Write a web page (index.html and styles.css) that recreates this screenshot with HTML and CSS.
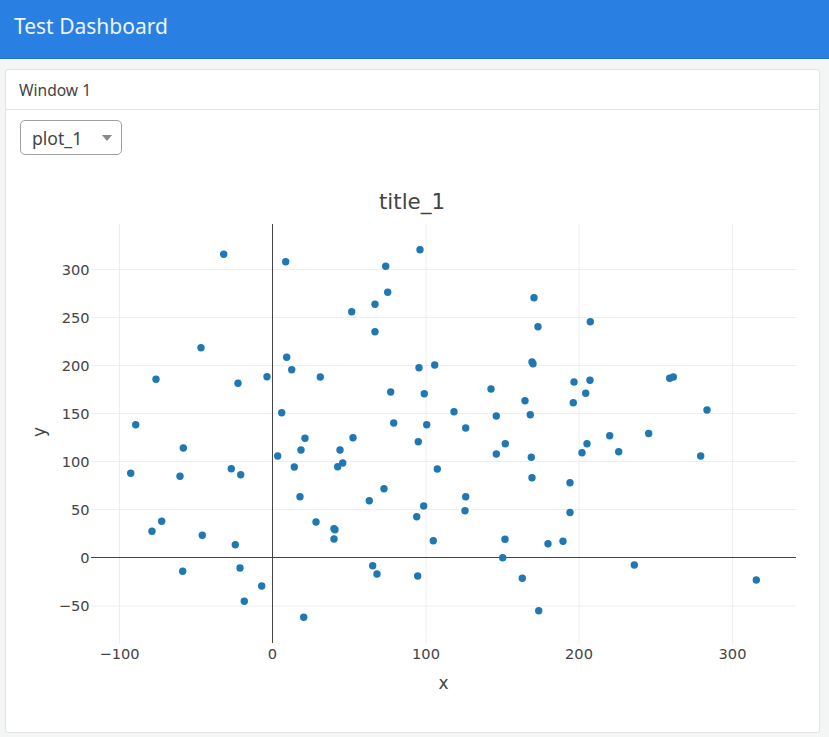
FILE: index.html
```html
<!DOCTYPE html>
<html lang="en">
<head>
<meta charset="utf-8">
<title>Test Dashboard</title>
<link rel="stylesheet" href="styles.css">
</head>
<body>
<header class="topbar">Test Dashboard</header>
<main class="content">
  <section class="card">
    <div class="card-header">Window 1</div>
    <div class="card-body">
      <div class="select"><span>plot_1</span><i class="caret"></i></div>
      <svg class="plot" width="813" height="562" viewBox="6 170 813 562">
        <g class="grid">
          <path d="M119.5 224V644M426 224V644M579 224V644M732.5 224V644"/>
          <path d="M91 269.5H796M91 317.5H796M91 365.5H796M91 413.5H796M91 461.5H796M91 509.5H796M91 606H796"/>
        </g>
        <path class="axis" d="M272.5 224V643M91 557.5H796"/>
        <g class="dots">
          <circle cx="223.7" cy="254.3" r="3.7"/><circle cx="285.7" cy="261.7" r="3.7"/><circle cx="201" cy="347.7" r="3.7"/><circle cx="286.7" cy="357.3" r="3.7"/><circle cx="291.7" cy="369.7" r="3.7"/><circle cx="156" cy="379.3" r="3.7"/><circle cx="238" cy="383.3" r="3.7"/><circle cx="267" cy="376.7" r="3.7"/><circle cx="320.3" cy="377" r="3.7"/><circle cx="281.7" cy="412.7" r="3.7"/><circle cx="135.7" cy="424.7" r="3.7"/>
          <circle cx="420" cy="249.7" r="3.7"/><circle cx="385.7" cy="266.3" r="3.7"/><circle cx="387.7" cy="292.3" r="3.7"/><circle cx="375" cy="304.3" r="3.7"/><circle cx="351.7" cy="311.7" r="3.7"/><circle cx="375" cy="331.7" r="3.7"/><circle cx="534" cy="297.7" r="3.7"/><circle cx="538" cy="326.7" r="3.7"/><circle cx="419" cy="367.7" r="3.7"/><circle cx="434.7" cy="365" r="3.7"/><circle cx="532" cy="362" r="3.7"/><circle cx="533" cy="363.7" r="3.7"/><circle cx="390.7" cy="392" r="3.7"/><circle cx="424.3" cy="393.7" r="3.7"/><circle cx="491" cy="389" r="3.7"/><circle cx="525" cy="400.7" r="3.7"/><circle cx="530.3" cy="414.7" r="3.7"/><circle cx="454" cy="411.7" r="3.7"/><circle cx="496.3" cy="416" r="3.7"/><circle cx="393.7" cy="423" r="3.7"/><circle cx="426.7" cy="424.7" r="3.7"/><circle cx="465.7" cy="428" r="3.7"/>
          <circle cx="590.3" cy="321.7" r="3.7"/><circle cx="574" cy="382" r="3.7"/><circle cx="590" cy="380.3" r="3.7"/><circle cx="669.7" cy="378.3" r="3.7"/><circle cx="673.3" cy="377" r="3.7"/><circle cx="585.7" cy="393.3" r="3.7"/><circle cx="573.3" cy="402.7" r="3.7"/><circle cx="707" cy="410" r="3.7"/><circle cx="609.7" cy="435.7" r="3.7"/><circle cx="648.7" cy="433.5" r="3.7"/>
          <circle cx="183.3" cy="448" r="3.7"/><circle cx="305" cy="438.3" r="3.7"/><circle cx="301" cy="450" r="3.7"/><circle cx="277.7" cy="456" r="3.7"/><circle cx="294.3" cy="467" r="3.7"/><circle cx="130.7" cy="473.3" r="3.7"/><circle cx="180" cy="476.3" r="3.7"/><circle cx="231.3" cy="468.7" r="3.7"/><circle cx="240.7" cy="474.7" r="3.7"/><circle cx="300" cy="496.7" r="3.7"/><circle cx="161.7" cy="521.3" r="3.7"/><circle cx="316" cy="522" r="3.7"/><circle cx="152" cy="531.3" r="3.7"/><circle cx="202.3" cy="535.3" r="3.7"/><circle cx="235.3" cy="544.7" r="3.7"/><circle cx="182.7" cy="571.3" r="3.7"/><circle cx="240" cy="568" r="3.7"/><circle cx="261.7" cy="586" r="3.7"/><circle cx="244.3" cy="601.3" r="3.7"/><circle cx="303.7" cy="617.3" r="3.7"/>
          <circle cx="353" cy="437.7" r="3.7"/><circle cx="418.3" cy="441.7" r="3.7"/><circle cx="505.3" cy="443.7" r="3.7"/><circle cx="496.3" cy="454" r="3.7"/><circle cx="531.3" cy="457.3" r="3.7"/><circle cx="340" cy="450" r="3.7"/><circle cx="342.7" cy="463" r="3.7"/><circle cx="337.7" cy="466.7" r="3.7"/><circle cx="437.3" cy="469" r="3.7"/><circle cx="532" cy="477.7" r="3.7"/><circle cx="570" cy="482.7" r="3.7"/><circle cx="384" cy="488.7" r="3.7"/><circle cx="369.3" cy="500.7" r="3.7"/><circle cx="465.7" cy="496.7" r="3.7"/><circle cx="423.7" cy="506" r="3.7"/><circle cx="465" cy="510.7" r="3.7"/><circle cx="416.7" cy="516.7" r="3.7"/><circle cx="570" cy="512.5" r="3.7"/><circle cx="334" cy="528.7" r="3.7"/><circle cx="335" cy="529.7" r="3.7"/><circle cx="334" cy="539" r="3.7"/><circle cx="433.3" cy="540.7" r="3.7"/><circle cx="505" cy="539.3" r="3.7"/><circle cx="548" cy="543.7" r="3.7"/><circle cx="563" cy="541.3" r="3.7"/><circle cx="502.7" cy="557.7" r="3.7"/><circle cx="372.7" cy="565.7" r="3.7"/><circle cx="377" cy="574" r="3.7"/><circle cx="417.7" cy="576" r="3.7"/><circle cx="522.3" cy="578.3" r="3.7"/><circle cx="538.7" cy="610.7" r="3.7"/>
          <circle cx="587" cy="443.7" r="3.7"/><circle cx="582" cy="452.7" r="3.7"/><circle cx="618.7" cy="451.7" r="3.7"/><circle cx="700.7" cy="456" r="3.7"/><circle cx="634.3" cy="565" r="3.7"/><circle cx="756.3" cy="580" r="3.7"/>
        </g>
        <g class="ticks ticks-y">
          <text x="89.5" y="275">300</text><text x="89.5" y="323">250</text><text x="89.5" y="371">200</text><text x="89.5" y="419">150</text><text x="89.5" y="467">100</text><text x="89.5" y="515">50</text><text x="89.5" y="563">0</text><text x="89.5" y="611">−50</text>
        </g>
        <g class="ticks ticks-x">
          <text x="119.5" y="658.5">−100</text><text x="272.5" y="658.5">0</text><text x="426" y="658.5">100</text><text x="579" y="658.5">200</text><text x="732.5" y="658.5">300</text>
        </g>
        <text class="plot-title" x="412" y="209">title_1</text>
        <text class="axis-title" x="443.5" y="689">x</text>
        <text class="axis-title" transform="translate(45 432) rotate(-90)">y</text>
      </svg>
    </div>
  </section>
</main>
</body>
</html>
```
FILE: styles.css
```css
* { box-sizing: border-box; }
html, body { margin: 0; height: 100%; }
body {
  display: flex;
  flex-direction: column;
  background: #f4f6f6;
  font-family: "Noto Sans", sans-serif;
  color: #444;
  overflow: hidden;
}
.topbar {
  height: 59px;
  flex: none;
  display: flex;
  align-items: center;
  padding: 0 0 7px 14px;
  background: #2a7fe2;
  border-bottom: 1px solid #2570c8;
  color: #eef5fd;
  font-size: 21px;
}
.content {
  flex: 1;
  display: flex;
  padding: 10px 9px 4px 5px;
  min-height: 0;
}
.card {
  flex: 1;
  background: #fff;
  border: 1px solid #e2e4e4;
  border-radius: 3px;
  display: flex;
  flex-direction: column;
}
.card-header {
  height: 40px;
  flex: none;
  display: flex;
  align-items: center;
  padding-left: 13px;
  border-bottom: 1px solid #e2e4e4;
  font-size: 15.6px;
}
.card-body {
  flex: 1;
  display: flex;
  flex-direction: column;
  align-items: flex-start;
}
.select {
  width: 102px;
  height: 35px;
  margin: 10px 0 15px 14px;
  padding: 0 9px 0 11px;
  display: flex;
  align-items: center;
  justify-content: space-between;
  border: 1px solid #a0a0a0;
  border-radius: 5px;
  background: #fff;
  color: #444;
  font-size: 17.6px;
}
.caret {
  width: 0;
  height: 0;
  border-left: 5px solid transparent;
  border-right: 5px solid transparent;
  border-top: 6px solid #888;
}
.plot { display: block; }
.grid path { fill: none; stroke: #eee; stroke-width: 1; }
.axis { fill: none; stroke: #444; stroke-width: 1; }
.dots circle { fill: #1f77b4; }
.ticks text, .plot-title, .axis-title {
  font-family: "DejaVu Sans", sans-serif;
  fill: #444;
}
.ticks text { font-size: 14.6px; }
.ticks-y text { text-anchor: end; }
.ticks-x text { text-anchor: middle; }
.plot-title { font-size: 21.4px; text-anchor: middle; }
.axis-title { font-size: 17px; text-anchor: middle; }
```
